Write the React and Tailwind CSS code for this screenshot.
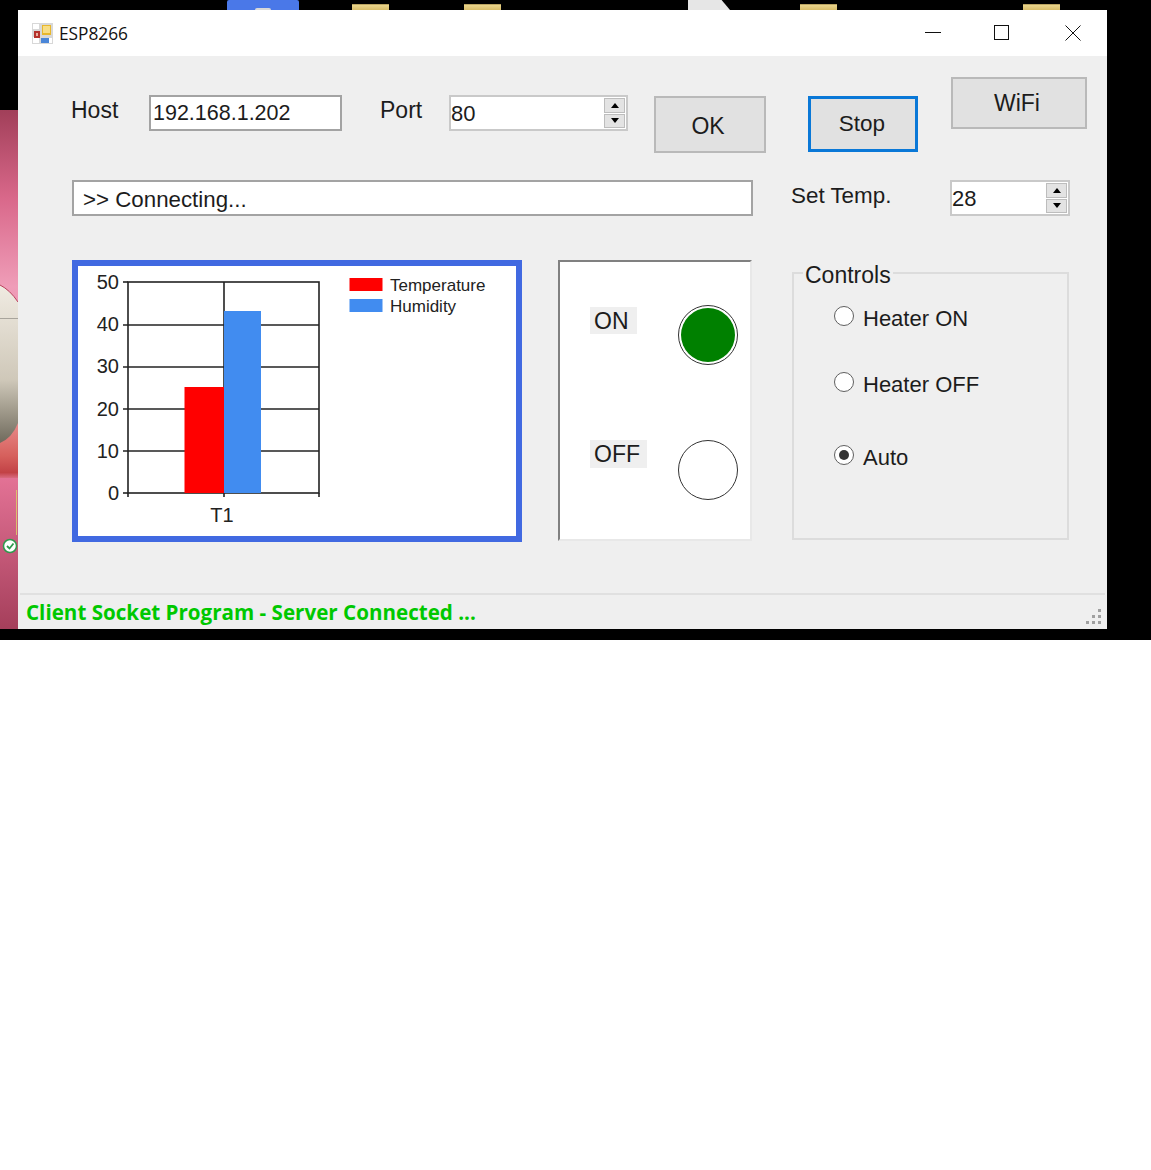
const SANS = "font-['Liberation_Sans',Arial,sans-serif]"

function Spinner({ value, width }) {
  return (
    <div className={`${width} h-[36px] shrink-0 flex items-stretch bg-white border-2 border-[#c9c9c9] pr-[1px]`}>
      <div className="flex-1 text-[22px] leading-[33px] text-[#1c1c1c]">{value}</div>
      <div className="w-[21px] flex flex-col gap-[1px] py-[1px]">
        <div className="flex-1 flex items-center justify-center bg-[#e3e3e3] border border-[#bdbdbd]">
          <div className="w-0 h-0 border-x-[4px] border-x-transparent border-b-[5px] border-b-black" />
        </div>
        <div className="flex-1 flex items-center justify-center bg-[#e3e3e3] border border-[#bdbdbd]">
          <div className="w-0 h-0 border-x-[4px] border-x-transparent border-t-[5px] border-t-black" />
        </div>
      </div>
    </div>
  )
}

function Radio({ label, checked, className }) {
  return (
    <div className={`flex items-center h-[26px] ${className}`}>
      <div className="w-[20px] h-[20px] mb-[4px] rounded-full border-[1.5px] border-[#5f5f5f] bg-white flex items-center justify-center">
        {checked && <div className="w-[10px] h-[10px] rounded-full bg-[#333]" />}
      </div>
      <span className="ml-[9px] pt-[2px] text-[22px] leading-[26px] text-[#1c1c1c]">{label}</span>
    </div>
  )
}

function Folder({ className }) {
  return <div className={`w-[37px] h-[6px] bg-gradient-to-b from-[#e9d48c] to-[#d8bd68] border-t border-[#b9a360] ${className}`} />
}

function PinkStrip() {
  return (
    <svg width="18" height="519" viewBox="0 0 18 519" className="block">
      <defs>
        <linearGradient id="pink" x1="0" y1="0" x2="0" y2="1">
          <stop offset="0" stopColor="#a13f59" />
          <stop offset="0.17" stopColor="#d9688a" />
          <stop offset="0.34" stopColor="#ef9db8" />
          <stop offset="0.68" stopColor="#e9779b" />
          <stop offset="1" stopColor="#a53f5b" />
        </linearGradient>
        <linearGradient id="egg" x1="0" y1="0" x2="0" y2="1">
          <stop offset="0" stopColor="#f0ebe2" />
          <stop offset="0.6" stopColor="#cfc8b9" />
          <stop offset="1" stopColor="#6f6a5c" />
        </linearGradient>
        <linearGradient id="flesh" x1="0" y1="0" x2="0" y2="1">
          <stop offset="0" stopColor="#e88a8a" />
          <stop offset="0.6" stopColor="#d6605c" />
          <stop offset="0.9" stopColor="#c24246" />
          <stop offset="1" stopColor="#d96a80" />
        </linearGradient>
      </defs>
      <rect width="18" height="519" fill="url(#pink)" />
      <rect y="313" width="18" height="55" fill="url(#flesh)" />
      <path d="M0 175 Q10 180 18 192 L18 313 Q12 328 0 333 Z" fill="url(#egg)" />
      <path d="M0 175 Q10 180 18 192" fill="none" stroke="#b8425c" strokeWidth="1" />
      <rect y="208" width="18" height="1" fill="#a8a49c" />
      <rect x="16" y="380" width="1" height="45" fill="#d9c36d" />
      <circle cx="10" cy="436" r="6.500" fill="#fff" stroke="#2e9a4c" strokeWidth="1.5" />
      <path d="M7 436 L9.500 438.500 L13.500 433.500" fill="none" stroke="#2e9a4c" strokeWidth="1.8" />
    </svg>
  )
}

function AppIcon() {
  return (
    <svg width="21" height="21" viewBox="0 0 21 21" className="shrink-0">
      <rect width="21" height="21" fill="#d8d8d8" />
      <rect x="1" y="1" width="6" height="5" fill="#fff" />
      <rect x="1" y="14" width="6" height="6" fill="#fff" />
      <rect x="14" y="15" width="6" height="5" fill="#fff" />
      <rect x="2" y="8" width="6" height="7" fill="#b5322c" />
      <rect x="4" y="10" width="2" height="3" fill="#e8b0a0" />
      <rect x="10" y="2" width="9" height="10" fill="#e8b72c" />
      <rect x="11" y="3" width="7" height="7" fill="#f8de85" />
      <rect x="9" y="15" width="8" height="5" fill="#4a86d8" />
    </svg>
  )
}

function Chart() {
  const grid = [325, 367, 409, 451]
  const axis = [['50', 282], ['40', 324], ['30', 366], ['20', 409], ['10', 451], ['0', 493]]
  return (
    <svg width="438" height="270" viewBox="78 266 438 270" className="block" fontFamily="'Liberation Sans', Arial, sans-serif">
      {grid.map(y => <line key={y} x1="123" x2="319" y1={y} y2={y} stroke="#222" strokeWidth="1.6" />)}
      <line x1="123" x2="128" y1="282" y2="282" stroke="#222" strokeWidth="1.6" />
      <rect x="128" y="282" width="191" height="211" fill="none" stroke="#222" strokeWidth="1.6" />
      <line x1="224" x2="224" y1="282" y2="497" stroke="#222" strokeWidth="1.6" />
      <line x1="123" x2="128" y1="493" y2="493" stroke="#222" strokeWidth="1.6" />
      <line x1="128" x2="128" y1="493" y2="497" stroke="#222" strokeWidth="1.6" />
      <line x1="319" x2="319" y1="493" y2="497" stroke="#222" strokeWidth="1.6" />
      <rect x="184.500" y="387" width="39.500" height="106" fill="#ff0000" />
      <rect x="224" y="311" width="37" height="182" fill="#418cf0" />
      {axis.map(([t, y]) => (
        <text key={t} x="119" y={y + 7} textAnchor="end" fontSize="20" fill="#222">{t}</text>
      ))}
      <text x="222" y="522" textAnchor="middle" fontSize="20" fill="#222">T1</text>
      <rect x="349.500" y="278" width="33" height="13" fill="#ff0000" />
      <rect x="349.500" y="299" width="33" height="13" fill="#418cf0" />
      <text x="390" y="291" fontSize="17" fill="#222">Temperature</text>
      <text x="390" y="312" fontSize="17" fill="#222">Humidity</text>
    </svg>
  )
}

export default function App() {
  return (
    <div className={`w-[1151px] h-[1170px] bg-white ${SANS}`}>
      <div className="flex h-[640px] bg-black">
        {/* Desktop behind the window */}
        <div className="w-[18px] shrink-0 pt-[110px]">
          <PinkStrip />
        </div>

        <div className="w-[1089px] shrink-0 flex flex-col">
          <div className="h-[10px] flex items-end">
            <div className="ml-[209px] w-[72px] h-[10px] bg-[#4a78e8] rounded-t-[2px] flex items-end justify-center">
              <div className="w-[16px] h-[2px] bg-[#d8d8d8] rounded-t-full" />
            </div>
            <Folder className="ml-[53px]" />
            <Folder className="ml-[75px]" />
            <div className="ml-[187px] w-[42px] h-[10px] bg-[#e6e6e6] [clip-path:polygon(0_0,80%_0,100%_100%,0_100%)]" />
            <Folder className="ml-[70px]" />
            <Folder className="ml-[186px]" />
          </div>

          {/* Window */}
          <div className="h-[619px] bg-[#efefef] flex flex-col">
            <div className="h-[46px] bg-white flex items-center pl-[14px] shrink-0">
              <AppIcon />
              <span className="ml-[6px] w-[70px] pt-[2px] text-[17.3px] text-[#111] font-['Open_Sans',sans-serif] leading-none">ESP8266</span>
              <svg width="16" height="16" viewBox="0 0 16 16" className="ml-[796px]">
                <line x1="0" x2="16" y1="7.500" y2="7.500" stroke="#111" strokeWidth="1" />
              </svg>
              <svg width="16" height="16" viewBox="0 0 16 16" className="ml-[53px]">
                <rect x="0.500" y="0.500" width="14" height="14" fill="none" stroke="#111" strokeWidth="1" />
              </svg>
              <svg width="16" height="16" viewBox="0 0 16 16" className="ml-[55px]">
                <path d="M0.500 0.500 L15.500 15.500 M15.500 0.500 L0.500 15.500" fill="none" stroke="#111" strokeWidth="1" />
              </svg>
            </div>

            <div className="flex-1 flex flex-col pt-[21px]">
              {/* Connection row */}
              <div className="flex items-start pl-[53px] h-[76px]">
                <div className="w-[78px] mt-[18px] text-[23px] leading-[30px] text-[#1c1c1c]">Host</div>
                <div className="w-[193px] h-[36px] mt-[18px] bg-white border-2 border-[#a3a3a3] pl-[2px] text-[21.500px] leading-[33px] text-[#1c1c1c]">192.168.1.202</div>
                <div className="w-[69px] ml-[38px] mt-[18px] text-[23px] leading-[30px] text-[#1c1c1c]">Port</div>
                <div className="mt-[18px]"><Spinner value="80" width="w-[179px]" /></div>
                <button className="ml-[26px] mt-[19px] w-[112px] h-[57px] pt-[4px] pr-[4px] bg-[#e1e1e1] border-2 border-[#b9b9b9] text-[23px] text-[#1c1c1c]">OK</button>
                <button className="ml-[42px] mt-[19px] w-[110px] h-[56px] pr-[2px] bg-[#e1e1e1] border-[3px] border-[#0a78d7] text-[22.500px] text-[#1c1c1c]">Stop</button>
                <button className="ml-[33px] w-[136px] h-[52px] pr-[4px] bg-[#e1e1e1] border-2 border-[#b9b9b9] text-[23px] text-[#1c1c1c]">WiFi</button>
              </div>

              {/* Status row */}
              <div className="flex items-start pl-[54px] mt-[27px] h-[36px]">
                <div className="w-[681px] h-[36px] bg-white border-2 border-[#a3a3a3] pl-[9px] text-[22.300px] leading-[35px] text-[#1c1c1c]">&gt;&gt; Connecting...</div>
                <div className="w-[159px] ml-[38px] text-[22.400px] leading-[32px] text-[#1c1c1c]">Set Temp.</div>
                <Spinner value="28" width="w-[120px]" />
              </div>

              {/* Chart, lamps, controls */}
              <div className="flex items-start pl-[54px] mt-[44px]">
                <div className="w-[450px] h-[282px] bg-white border-[6px] border-[#4169e1] shrink-0">
                  <Chart />
                </div>

                <div className="w-[194px] h-[281px] ml-[36px] bg-white border-2 border-[#808080] border-r-[#e8e8e8] border-b-[#e8e8e8] pt-[43px] pl-[30px] pr-[12px] shrink-0">
                  <div className="flex items-start justify-between">
                    <span className="mt-[2px] pl-[4px] pr-[8px] pt-[1px] bg-[#efefef] text-[23px] leading-[26px] text-[#1c1c1c]">ON</span>
                    <div className="w-[60px] h-[60px] rounded-full border-[1.5px] border-[#333] bg-white p-[2px]">
                      <div className="w-full h-full rounded-full bg-[#008000]" />
                    </div>
                  </div>
                  <div className="flex items-start justify-between mt-[75px]">
                    <span className="pl-[4px] pr-[7px] pt-[1px] bg-[#efefef] text-[23px] leading-[27px] text-[#1c1c1c]">OFF</span>
                    <div className="w-[60px] h-[60px] rounded-full border-[1.5px] border-[#333] bg-white" />
                  </div>
                </div>

                <fieldset className="w-[277px] h-[282px] ml-[40px] -mt-[2px] border-2 border-[#dcdcdc]">
                  <legend className="ml-[9px] px-[2px] pt-[4px] text-[23px] leading-[26px] text-[#1c1c1c]">Controls</legend>
                  <div className="pl-[40px]">
                    <Radio label="Heater ON" className="mt-[17px]" />
                    <Radio label="Heater OFF" className="mt-[40px]" />
                    <Radio label="Auto" checked className="mt-[47px]" />
                  </div>
                </fieldset>
              </div>

              {/* Status bar */}
              <div className="mt-auto mx-[2px] h-[36px] border-t-2 border-[#e0e0e0] flex items-center justify-between pl-[6px] pr-[3px]">
                <span className="text-[20.600px] font-bold text-[#00c800] font-['Open_Sans',sans-serif] leading-none">Client Socket Program - Server Connected ...</span>
                <svg width="16" height="18" viewBox="0 0 16 18" className="self-end mb-[2px]">
                  <g fill="#a0a0a0">
                    <rect x="12" y="0" width="3" height="3" />
                    <rect x="6" y="6" width="3" height="3" />
                    <rect x="12" y="6" width="3" height="3" />
                    <rect x="0" y="12" width="3" height="3" />
                    <rect x="6" y="12" width="3" height="3" />
                    <rect x="12" y="12" width="3" height="3" />
                  </g>
                </svg>
              </div>
            </div>
          </div>
        </div>
      </div>
    </div>
  )
}
